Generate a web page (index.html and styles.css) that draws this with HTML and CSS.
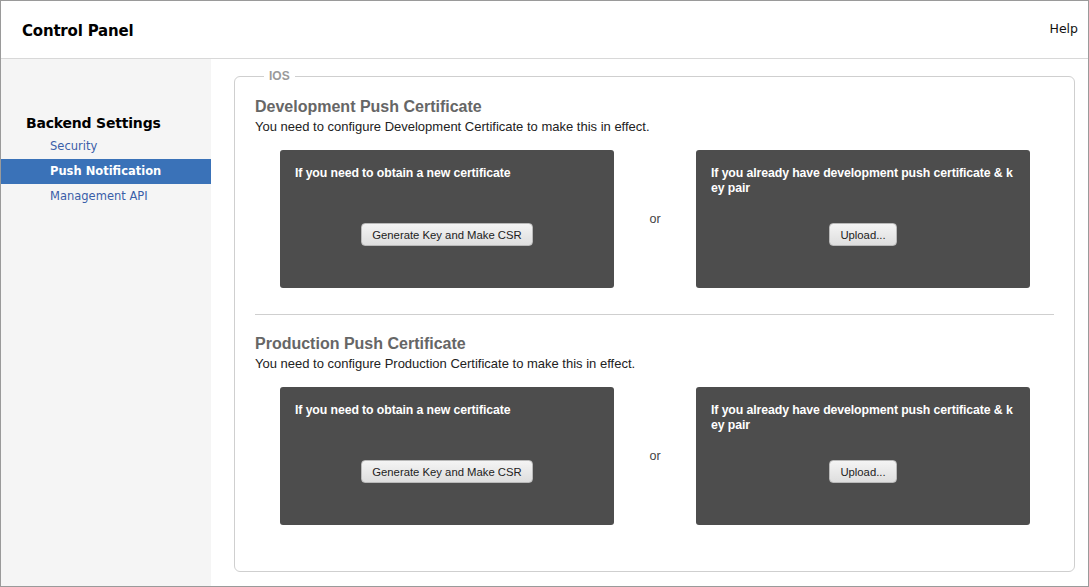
FILE: index.html
```html
<!DOCTYPE html>
<html>
<head>
<meta charset="utf-8">
<link rel="stylesheet" href="styles.css">
</head>
<body>
<div class="window">
  <header class="topbar">
    <h1 class="title">Control Panel</h1>
    <a class="help">Help</a>
  </header>
  <div class="body">
    <nav class="sidebar">
      <h2 class="side-title">Backend Settings</h2>
      <ul class="side-list">
        <li class="side-item">Security</li>
        <li class="side-item active">Push Notification</li>
        <li class="side-item">Management API</li>
      </ul>
    </nav>
    <main class="main">
      <fieldset class="group">
        <legend class="legend">IOS</legend>
        <section class="cert">
          <h3 class="cert-title">Development Push Certificate</h3>
          <p class="cert-desc">You need to configure Development Certificate to make this in effect.</p>
          <div class="options">
            <div class="card">
              <p class="card-text">If you need to obtain a new certificate</p>
              <button class="btn">Generate Key and Make CSR</button>
            </div>
            <div class="or">or</div>
            <div class="card">
              <p class="card-text">If you already have development push certificate &amp; k ey pair</p>
              <button class="btn">Upload...</button>
            </div>
          </div>
        </section>
        <hr class="divider">
        <section class="cert">
          <h3 class="cert-title">Production Push Certificate</h3>
          <p class="cert-desc">You need to configure Production Certificate to make this in effect.</p>
          <div class="options">
            <div class="card">
              <p class="card-text">If you need to obtain a new certificate</p>
              <button class="btn">Generate Key and Make CSR</button>
            </div>
            <div class="or">or</div>
            <div class="card">
              <p class="card-text">If you already have development push certificate &amp; k ey pair</p>
              <button class="btn">Upload...</button>
            </div>
          </div>
        </section>
      </fieldset>
    </main>
  </div>
</div>
</body>
</html>
```

FILE: styles.css
```css
* { box-sizing: border-box; }
html, body { margin: 0; padding: 0; background: #fff; }
body { font-family: "Liberation Sans", Arial, sans-serif; }

.window {
  width: 1089px;
  height: 587px;
  border: 1px solid #9a9a9a;
  display: flex;
  flex-direction: column;
  overflow: hidden;
}

.topbar {
  height: 58px;
  flex: none;
  display: flex;
  align-items: center;
  justify-content: space-between;
  padding: 0 10px 0 21px;
  border-bottom: 1px solid #d8d8d8;
}
.title {
  margin: 2px 0 0;
  font-family: "DejaVu Sans", sans-serif;
  font-weight: bold;
  font-size: 15px;
  color: #000;
  letter-spacing: -0.2px;
}
.help {
  font-family: "DejaVu Sans", sans-serif;
  font-size: 12.5px;
  color: #111;
  margin-top: -2px;
}

.body {
  flex: 1;
  display: flex;
  min-height: 0;
}

.sidebar {
  width: 210px;
  flex: none;
  background: #f5f5f5;
  padding-top: 56px;
  font-family: "DejaVu Sans", sans-serif;
}
.side-title {
  margin: 0 0 3px 25px;
  font-size: 14px;
  font-weight: bold;
  color: #000;
  letter-spacing: -0.2px;
}
.side-list {
  list-style: none;
  margin: 0;
  padding: 0;
}
.side-item {
  height: 25px;
  line-height: 25px;
  padding-left: 49px;
  font-size: 11.5px;
  color: #3a5ea8;
}
.side-item.active {
  background: #3a72b8;
  color: #fff;
  font-weight: bold;
}

.main {
  flex: 1;
  padding: 10px 13px 14px 23px;
  display: flex;
  min-width: 0;
}
.group {
  flex: 1;
  margin: 0;
  border: 1px solid #cfcfcf;
  border-radius: 6px;
  padding: 15px 20px 0 20px;
}
.legend {
  margin-left: 9px;
  padding: 0 5px;
  font-size: 12px;
  font-weight: bold;
  color: #9a9a9a;
}

.cert-title {
  margin: 0;
  font-size: 16px;
  font-weight: bold;
  color: #666;
  line-height: 18px;
}
.cert-desc {
  margin: 3px 0 0;
  font-size: 13px;
  color: #222;
  line-height: 16px;
}
.options {
  margin-top: 15px;
  display: flex;
  align-items: center;
  padding-left: 25px;
}
.card {
  width: 334px;
  height: 138px;
  background: #4d4d4d;
  border-radius: 3px;
  padding: 16px 15px 0 15px;
  display: flex;
  flex-direction: column;
  align-items: center;
}
.card-text {
  align-self: stretch;
  margin: 0 -5px 0 0;
  color: #fff;
  font-size: 12.3px;
  font-weight: bold;
  line-height: 15px;
  height: 44px;
  letter-spacing: -0.1px;
}
.btn {
  margin-top: 13px;
  height: 23px;
  padding: 0 10px;
  font-family: "Liberation Sans", Arial, sans-serif;
  font-size: 11.3px;
  color: #222;
  background: linear-gradient(#f4f4f4, #dedede);
  border: 1px solid #b9b9b9;
  border-radius: 4px;
}
.or {
  width: 82px;
  text-align: center;
  font-size: 12.5px;
  color: #444;
}

.divider {
  margin: 26px 0 20px;
  border: 0;
  border-top: 1px solid #cfcfcf;
}
```
